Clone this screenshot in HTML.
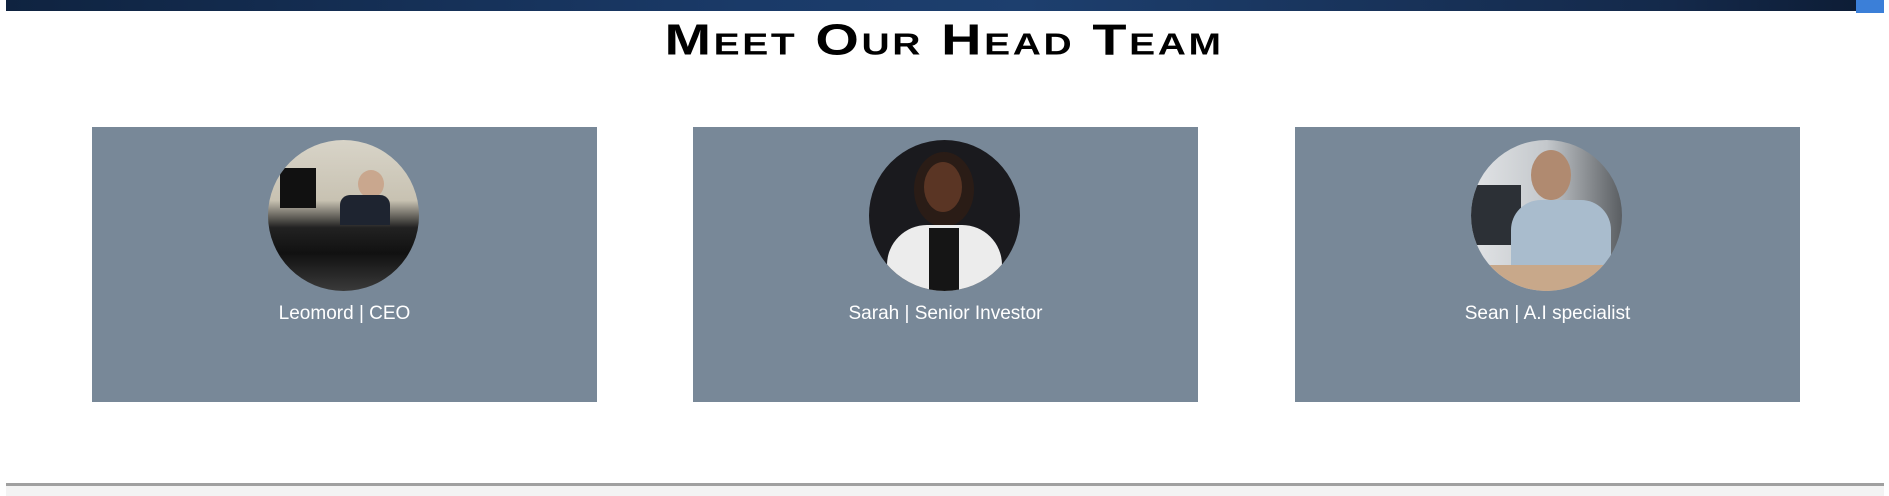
<!DOCTYPE html>
<html><head><meta charset="utf-8"><style>
html,body{margin:0;padding:0;}
body{width:1889px;height:496px;position:relative;overflow:hidden;background:#fff;font-family:"Liberation Sans",sans-serif;}
.topbar{position:absolute;left:6px;top:0;width:1850px;height:11px;background:linear-gradient(90deg,#0f2340 0%,#1a3a68 40%,#1d3f6e 55%,#14294a 90%,#0d1d36 100%);}
.acc{position:absolute;left:1856px;top:0;width:28px;height:13px;background:#3b7fd8;}
.title{position:absolute;left:0;width:1889px;top:19px;text-align:center;}
.title span{display:inline-block;font-weight:bold;font-size:43px;font-variant:small-caps;letter-spacing:2px;color:#000;transform:scaleX(1.3) scaleY(1.02);transform-origin:center;line-height:1;}
.card{position:absolute;top:127px;width:505px;height:275px;background:#788898;}
.circ{position:absolute;left:176px;top:13px;width:151px;height:151px;border-radius:50%;overflow:hidden;}
.name{position:absolute;top:176px;width:100%;text-align:center;color:#fff;font-size:19px;}
.line{position:absolute;left:6px;top:483px;width:1878px;height:3px;background:#a0a0a0;}
.foot{position:absolute;left:6px;top:486px;width:1878px;height:10px;background:#f3f3f3;}
</style></head><body>
<div class="topbar"></div><div class="acc"></div>
<div class="title"><span>Meet Our Head Team</span></div>
<div class="card" style="left:92px"><div class="circ" style="background:linear-gradient(180deg,#d8d4c8 0%,#c8c2b2 40%,#222 58%,#111 75%,#3a3a3a 100%);">
<div style="position:absolute;left:90px;top:30px;width:26px;height:28px;border-radius:50%;background:#c9a78e"></div>
<div style="position:absolute;left:72px;top:55px;width:50px;height:30px;background:#1e2430;border-radius:10px 10px 0 0"></div>
<div style="position:absolute;left:12px;top:28px;width:36px;height:40px;background:#111"></div></div>
<div class="name">Leomord | CEO</div></div>
<div class="card" style="left:693px"><div class="circ" style="background:#1a1a1e;">
<div style="position:absolute;left:45px;top:12px;width:60px;height:75px;border-radius:50%;background:#2a1c16"></div>
<div style="position:absolute;left:55px;top:22px;width:38px;height:50px;border-radius:50%;background:#5a3524"></div>
<div style="position:absolute;left:18px;top:85px;width:115px;height:80px;border-radius:40px 40px 0 0;background:#ececec"></div>
<div style="position:absolute;left:60px;top:88px;width:30px;height:70px;background:#151515"></div></div>
<div class="name">Sarah | Senior Investor</div></div>
<div class="card" style="left:1295px"><div class="circ" style="background:linear-gradient(90deg,#e2e4e6 0%,#c4c8cc 50%,#5a5e62 100%);">
<div style="position:absolute;left:0;top:45px;width:50px;height:60px;background:#2c3036"></div>
<div style="position:absolute;left:60px;top:10px;width:40px;height:50px;border-radius:50%;background:#b08a70"></div>
<div style="position:absolute;left:40px;top:60px;width:100px;height:80px;border-radius:30px 30px 0 0;background:#a9bccd"></div>
<div style="position:absolute;left:0;top:125px;width:151px;height:30px;background:#c8a88a"></div></div>
<div class="name">Sean | A.I specialist</div></div>
<div class="line"></div><div class="foot"></div>
</body></html>
